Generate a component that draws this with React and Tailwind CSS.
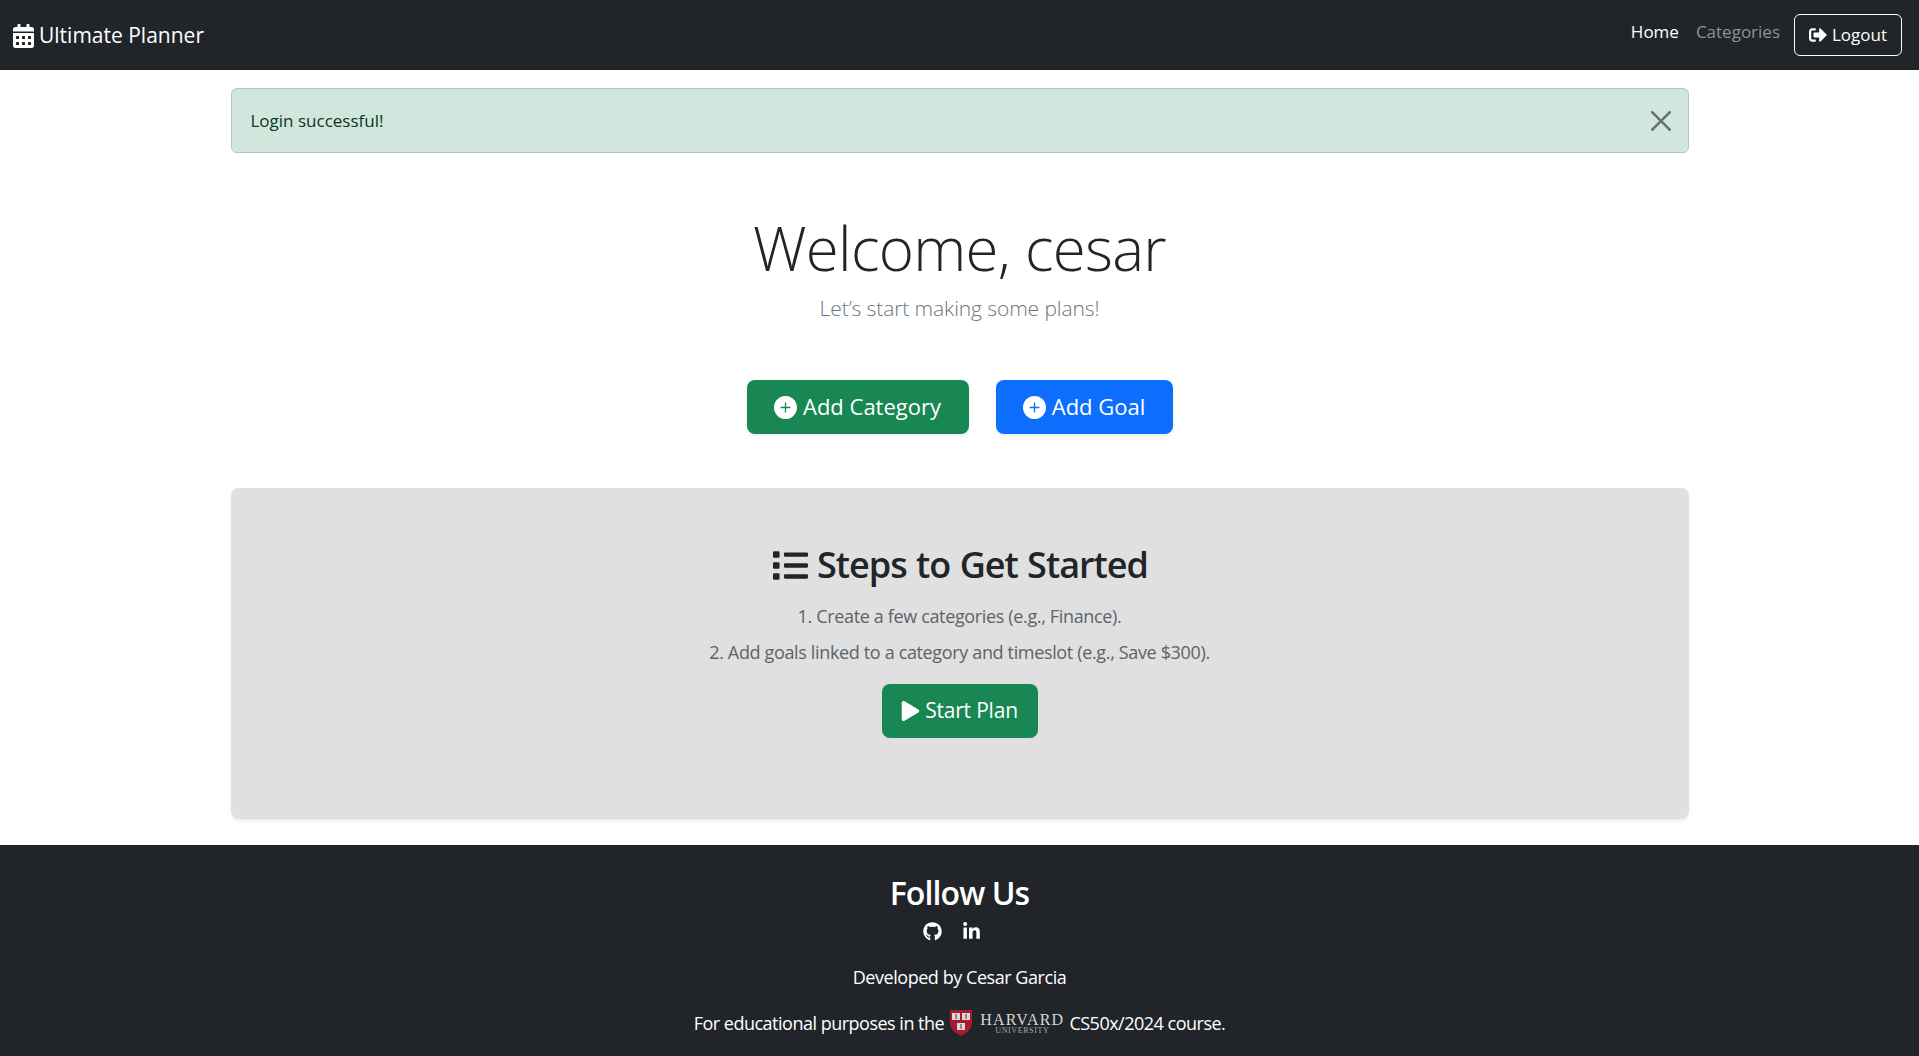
import React from 'react';
import { FaCalendarAlt, FaSignOutAlt, FaList, FaPlay, FaGithub, FaLinkedinIn } from 'react-icons/fa';

const PlusCircle = () => (
  <svg width="23" height="23" viewBox="0 0 16 16" fill="currentColor" fillRule="evenodd" className="mt-[2px]">
    <path d="M8 0a8 8 0 1 0 0 16A8 8 0 0 0 8 0z M7.55 4.6h.9v2.95h2.95v.9H8.45v2.95h-.9V8.45H4.6v-.9h2.95z" />
  </svg>
);

const HarvardLogo = () => (
  <span className="inline-flex items-center mx-[5px] align-middle">
    <svg width="24" height="28" viewBox="0 0 24 28">
      <path d="M1 1h22v13c0 6-5 10-11 13C6 24 1 20 1 14z" fill="#a51c30" />
      <g fill="#d9d9d9">
        <rect x="3" y="4" width="8" height="7" />
        <rect x="13" y="4" width="8" height="7" />
        <rect x="8" y="14" width="8" height="7" />
      </g>
      <g fill="#6b2a33">
        <rect x="6.5" y="5" width="1" height="5" />
        <rect x="16.5" y="5" width="1" height="5" />
        <rect x="11.5" y="15" width="1" height="5" />
      </g>
    </svg>
    <span className="flex flex-col items-center ml-[7px] font-['Liberation_Serif',serif] text-[#d6d6d6]">
      <span className="text-[16px] leading-[15px] tracking-[1.2px]">HARVARD</span>
      <span className="text-[8px] leading-[8px] tracking-[0.6px] text-[#a8a8a8]">UNIVERSITY</span>
    </span>
  </span>
);

export default function App() {
  return (
    <div className="min-h-[1056px] flex flex-col bg-white text-[#212529] font-['Open_Sans',sans-serif]">
      <nav className="h-[70px] bg-[#212529] flex items-center justify-between pl-[13px] pr-[17px]">
        <a className="flex items-center gap-[5px] text-white text-[21px] pt-[1px]">
          <FaCalendarAlt className="w-[21px] h-[24px]" />
          Ultimate Planner
        </a>
        <div className="flex items-center text-[17px]">
          <a className="text-white mb-[7px] mr-[17px]">Home</a>
          <a className="text-[#8f9193] mb-[7px] mr-[14px]">Categories</a>
          <a className="h-[42px] w-[108px] flex items-center justify-center gap-[5px] border border-white rounded-md text-white">
            <FaSignOutAlt className="w-[18px] h-[18px]" />
            Logout
          </a>
        </div>
      </nav>

      <main className="w-[1458px] mx-auto flex-1 pt-[18px]">
        <div className="h-[65px] flex items-center justify-between pl-[19px] pr-[17px] bg-[#d1e7dd] border border-[#a3cfbb] rounded-md text-[#0a3622] text-[17px]">
          <span>Login successful!</span>
          <svg width="20" height="20" viewBox="0 0 16 16" className="opacity-50" fill="#000">
            <path d="M.293.293a1 1 0 0 1 1.414 0L8 6.586 14.293.293a1 1 0 1 1 1.414 1.414L9.414 8l6.293 6.293a1 1 0 0 1-1.414 1.414L8 9.414l-6.293 6.293a1 1 0 0 1-1.414-1.414L6.586 8 .293 1.707a1 1 0 0 1 0-1.414" />
          </svg>
        </div>

        <div className="text-center mt-[57px]">
          <h1 className="text-[60px] leading-[77px] font-light tracking-[-0.7px]">Welcome, cesar</h1>
          <p className="text-[21px] leading-[30px] font-light text-[#6c757d] mt-[6px] tracking-[-0.1px]">Let’s start making some plans!</p>
        </div>

        <div className="flex justify-center gap-[27px] mt-[57px]">
          <button className="h-[54px] w-[222px] flex items-center justify-center gap-[6px] pb-[2px] bg-[#198754] text-white text-[22px] rounded-lg shadow-[0_2px_4px_rgba(0,0,0,0.075)]">
            <PlusCircle />
            Add Category
          </button>
          <button className="h-[54px] w-[177px] flex items-center justify-center gap-[6px] pb-[2px] bg-[#0d6efd] text-white text-[22px] rounded-lg shadow-[0_2px_4px_rgba(0,0,0,0.075)]">
            <PlusCircle />
            Add Goal
          </button>
        </div>

        <section className="mt-[54px] h-[331px] bg-[#e0e0e0] rounded-lg shadow-[0_2px_4px_rgba(0,0,0,0.075)] flex flex-col items-center pt-[53px]">
          <h2 className="flex items-center gap-[9px] ml-[2px] text-[36px] leading-[48px] font-semibold tracking-[-1px] [word-spacing:1px]">
            <FaList className="w-[35px] h-[35px]" />
            Steps to Get Started
          </h2>
          <p className="mt-[14px] text-[18px] leading-[27px] text-[#5c636a] tracking-[-0.35px]">1. Create a few categories (e.g., Finance).</p>
          <p className="mt-[9px] text-[18px] leading-[27px] text-[#5c636a] tracking-[-0.35px]">2. Add goals linked to a category and timeslot (e.g., Save $300).</p>
          <button className="mt-[18px] h-[54px] w-[156px] flex items-center justify-center gap-[5px] bg-[#198754] text-white text-[21px] rounded-lg tracking-[-0.2px]">
            <FaPlay className="w-[19px] h-[20px]" />
            Start Plan
          </button>
        </section>
      </main>

      <footer className="h-[211px] bg-[#212529] text-white text-center pt-[28px]">
        <h3 className="text-[32px] leading-[40px] font-semibold tracking-[-0.9px]">Follow Us</h3>
        <div className="flex justify-center items-center gap-[20px] mt-[6px] mr-[16px] h-[24px]">
          <FaGithub className="w-[19px] h-[19px]" />
          <FaLinkedinIn className="w-[19px] h-[19px]" />
        </div>
        <p className="mt-[21px] text-[18px] leading-[27px] tracking-[-0.45px]">Developed by Cesar Garcia</p>
        <p className="mt-[18px] text-[18px] leading-[27px] tracking-[-0.5px] flex justify-center items-center">
          For educational purposes in the
          <HarvardLogo />
          CS50x/2024 course.
        </p>
      </footer>
    </div>
  );
}
